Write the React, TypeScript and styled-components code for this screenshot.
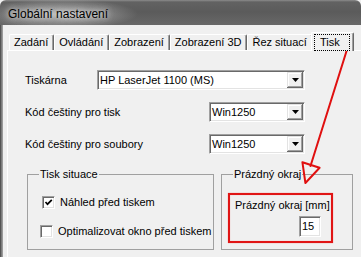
import React from 'react';
import styled, { createGlobalStyle } from 'styled-components';

const GlobalStyle = createGlobalStyle`
  html, body { margin: 0; padding: 0; background: #f0f0f0; }
  body {
    width: 361px; height: 257px; overflow: hidden;
    font-family: "Liberation Sans", Arial, sans-serif;
    font-size: 11px; color: #000;
  }
`;

const Window = styled.div`
  position: relative;
  width: 361px;
  height: 257px;
  display: flex;
  flex-direction: column;
  overflow: hidden;
  background: #f0f0f0;
`;

const TitleBar = styled.div`
  flex: none;
  height: 25px;
  display: flex;
  align-items: center;
  padding-left: 8px;
  border-radius: 6px 6px 0 0;
  background:
    radial-gradient(ellipse 78px 15px at 60px 14px, rgba(215,215,215,0.75), rgba(215,215,215,0) 100%),
    linear-gradient(#8c8c8c 0px, #626262 2px, #5b5b5b 12px, #686868 25px);
`;

const TitleText = styled.span`
  font-family: "Liberation Sans", Arial, sans-serif;
  font-size: 12px;
  color: #000;
  padding-top: 3px;
  text-shadow: 0 0 5px rgba(230,230,230,0.9), 0 0 9px rgba(230,230,230,0.8);
`;

const Client = styled.div`
  flex: 1;
  display: flex;
  flex-direction: column;
  padding: 7px 0 0 7px;
  box-shadow: inset 1px 0 #555, inset 2px 0 #7d7d7d, inset 3px 0 #9a9a9a;
`;

const TabStrip = styled.div`
  display: flex;
  align-items: flex-end;
  height: 18px;
  padding-left: 2px;
`;

const Tab = styled.div<{ $active?: boolean }>`
  position: relative;
  box-sizing: border-box;
  height: ${p => (p.$active ? 19 : 16)}px;
  margin-bottom: ${p => (p.$active ? -1 : 0)}px;
  margin-left: ${p => (p.$active ? -2 : 0)}px;
  padding: ${p => (p.$active ? '0 3px 0 2px' : '0 5px 0 4px')};
  display: flex;
  align-items: ${p => (p.$active ? 'flex-start' : 'center')};
  background: #f0f0f0;
  border-top: 1px solid #fff;
  border-left: 1px solid #fff;
  border-right: 1px solid #696969;
  box-shadow: inset -1px 0 #a0a0a0;
  border-radius: 2px 2px 0 0;
  z-index: ${p => (p.$active ? 1 : 0)};
  white-space: nowrap;
  line-height: 13px;
`;

const Focus = styled.span`
  margin-top: 1px;
  padding: 1px 9px 1px 5px;
  border: 1px dotted #000;
`;

const Panel = styled.div`
  width: 400px;
  flex: 1;
  border-top: 1px solid #fff;
  border-left: 1px solid #fff;
  padding: 19px 0 0 17px;
  display: flex;
  flex-direction: column;
`;

const Rows = styled.div`
  width: 280px;
  display: flex;
  flex-direction: column;
  gap: 12px;
`;

const Row = styled.div`
  display: flex;
  align-items: center;
  height: 20px;
  justify-content: space-between;
`;

const Label = styled.span`
  line-height: 13px;
  padding-top: 1px;
  white-space: nowrap;
`;

const Combo = styled.div<{ $w: number }>`
  box-sizing: border-box;
  width: ${p => p.$w}px;
  height: 20px;
  display: flex;
  align-items: center;
  background: #fff;
  border: 1px solid;
  border-color: #a0a0a0 #fff #fff #a0a0a0;
  box-shadow: inset 1px 1px #696969, inset -1px -1px #e3e3e3;
  padding: 1px;
`;

const ComboText = styled.span`
  flex: 1;
  padding-left: 1px;
  line-height: 13px;
  font-size: 11px;
`;

const DropButton = styled.div`
  width: 16px;
  height: 16px;
  box-sizing: border-box;
  display: flex;
  align-items: center;
  justify-content: center;
  background: #f0f0f0;
  box-shadow: inset -1px -1px #696969, inset 1px 1px #e3e3e3, inset -2px -2px #a0a0a0, inset 2px 2px #fff;
`;

const GroupsRow = styled.div`
  display: flex;
  gap: 7px;
  margin: 14px 0 0 2px;
`;

const Group = styled.fieldset<{ $w: number }>`
  box-sizing: border-box;
  width: ${p => p.$w}px;
  height: 82px;
  margin: 0;
  border: 1px solid #a0a0a0;
  border-radius: 0;
  padding: 12px 0 0 6px;
  display: flex;
  flex-direction: column;
`;

const Legend = styled.legend`
  margin-left: 5px;
  padding: 0 1px;
  line-height: 13px;
`;

const CheckRow = styled.label<{ $shift?: number }>`
  display: flex;
  align-items: center;
  gap: 5px;
  height: 16px;
  margin-left: ${p => 8 - (p.$shift ?? 0)}px;
  margin-top: 3px;
  margin-bottom: 13px;
  line-height: 13px;
  white-space: nowrap;
`;

const Box = styled.span`
  box-sizing: border-box;
  width: 13px;
  height: 13px;
  display: flex;
  align-items: center;
  justify-content: center;
  background: #fff;
  border: 1px solid;
  border-color: #a0a0a0 #fff #fff #a0a0a0;
  box-shadow: inset 1px 1px #696969, inset -1px -1px #e3e3e3;
`;

const Highlight = styled.div`
  box-sizing: border-box;
  width: 105px;
  height: 50px;
  border: 2px solid #e01515;
  box-shadow: 0 0 1px #f08080, inset 0 0 1px #f08080;
  padding: 3px 10px 0 5px;
  display: flex;
  flex-direction: column;
`;

const FieldInput = styled.div`
  align-self: flex-end;
  box-sizing: border-box;
  width: 22px;
  height: 21px;
  margin-top: 4px;
  background: #fff;
  border: 1px solid;
  border-color: #a0a0a0 #fff #fff #a0a0a0;
  box-shadow: inset 1px 1px #696969, inset -1px -1px #e3e3e3;
  padding: 3px 0 0 2px;
  font-size: 11px;
  line-height: 13px;
`;

const Overlay = styled.svg`
  position: absolute;
  left: 0;
  top: 0;
  pointer-events: none;
`;

const Arrow = () => (
  <svg width="7" height="4" viewBox="0 0 7 4">
    <polygon points="0,0 7,0 3.5,4" fill="#000" />
  </svg>
);

const Check = () => (
  <svg width="9" height="9" viewBox="0 0 9 9">
    <polyline points="1.5,4 3.5,6.2 7.8,1.8" fill="none" stroke="#000" strokeWidth="1.7" />
  </svg>
);

const tabs = ['Zadání', 'Ovládání', 'Zobrazení', 'Zobrazení 3D', 'Řez situací'];

export default function App() {
  return (
    <>
      <GlobalStyle />
      <Window>
        <TitleBar>
          <TitleText>Globální nastavení</TitleText>
        </TitleBar>
        <Client>
          <TabStrip>
            {tabs.map(t => (
              <Tab key={t}>{t}</Tab>
            ))}
            <Tab $active>
              <Focus>Tisk</Focus>
            </Tab>
          </TabStrip>
          <Panel>
            <Rows>
              <Row>
                <Label>Tiskárna</Label>
                <Combo $w={208}>
                  <ComboText>HP LaserJet 1100 (MS)</ComboText>
                  <DropButton><Arrow /></DropButton>
                </Combo>
              </Row>
              <Row>
                <Label>Kód češtiny pro tisk</Label>
                <Combo $w={96}>
                  <ComboText>Win1250</ComboText>
                  <DropButton><Arrow /></DropButton>
                </Combo>
              </Row>
              <Row>
                <Label>Kód češtiny pro soubory</Label>
                <Combo $w={96}>
                  <ComboText>Win1250</ComboText>
                  <DropButton><Arrow /></DropButton>
                </Combo>
              </Row>
            </Rows>
            <GroupsRow>
              <Group $w={187}>
                <Legend>Tisk situace</Legend>
                <CheckRow>
                  <Box><Check /></Box>
                  Náhled před tiskem
                </CheckRow>
                <CheckRow $shift={2}>
                  <Box />
                  Optimalizovat okno před tiskem
                </CheckRow>
              </Group>
              <Group $w={132}>
                <Legend>Prázdný okraj</Legend>
                <Highlight>
                  <Label>Prázdný okraj [mm]</Label>
                  <FieldInput>15</FieldInput>
                </Highlight>
              </Group>
            </GroupsRow>
          </Panel>
        </Client>
        <Overlay width="361" height="257" viewBox="0 0 361 257">
          <g fill="none" stroke="#e01010" strokeWidth="2" strokeLinejoin="round" strokeLinecap="round">
            <line x1="350" y1="40" x2="310.5" y2="166" />
            <polygon points="302.4,162.2 319.6,167.8 305.4,183" />
          </g>
        </Overlay>
      </Window>
    </>
  );
}
